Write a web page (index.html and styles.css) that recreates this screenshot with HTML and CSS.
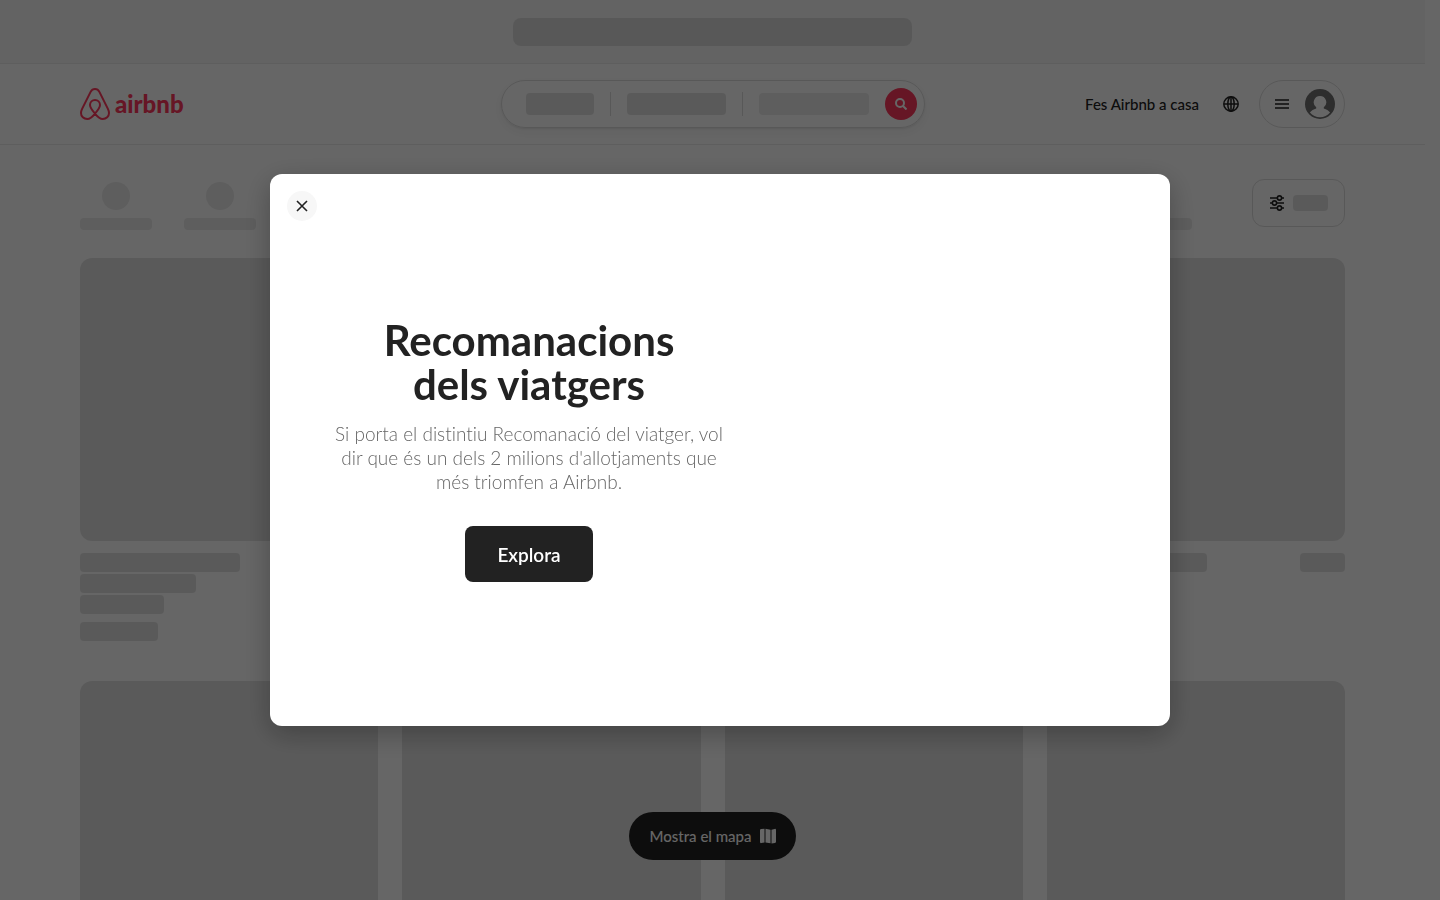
FILE: index.html
```html
<!DOCTYPE html>
<html lang="ca">
<head>
<meta charset="utf-8">
<title>Airbnb</title>
<meta name="viewport" content="width=device-width, initial-scale=1">
<link rel="stylesheet" href="styles.css">
</head>
<body>
<div class="page">
  <div class="banner"><span class="bone banner-bone"></span></div>
  <header class="header">
    <a class="logo" href="#" aria-label="Pàgina d'inici d'Airbnb">
      <svg width="30" height="32" viewBox="0 0 30 32" fill="none" stroke="currentColor" stroke-width="2"><path d="M15 25.6C12 22 10 19.400 10 16.900a5 5 0 0 1 10 0C20 19.400 18 22 15 25.600 12.500 28.800 10.200 31 7.300 31 3.700 31 1 28.300 1 24.900c0-1.200.3-2.300 1.100-4L10.600 3.900C11.600 1.900 13 1 15 1s3.400.9 4.400 2.900l8.500 17c.8 1.700 1.100 2.800 1.100 4 0 3.400-2.700 6.100-6.300 6.100-2.900 0-5.200-2.200-7.700-5.400z"/></svg>
      <span>airbnb</span>
    </a>
    <div class="search">
      <span class="bone search-a"></span><i class="rule"></i>
      <span class="bone search-b"></span><i class="rule"></i>
      <span class="bone search-c light"></span>
      <button class="search-go" aria-label="Cerca"><svg width="12" height="12" viewBox="0 0 12 12" fill="none" stroke="currentColor" stroke-width="2"><circle cx="5" cy="5" r="4"/><path d="M8 8l3.500 3.500"/></svg></button>
    </div>
    <nav class="account">
      <a class="host" href="#">Fes Airbnb a casa</a>
      <button class="globe" aria-label="Idioma"><svg width="16" height="16" viewBox="0 0 16 16" fill="none" stroke="currentColor" stroke-width="1.500"><circle cx="8" cy="8" r="7.200"/><ellipse cx="8" cy="8" rx="3.200" ry="7.200"/><path d="M1 8h14M8 1v14"/></svg></button>
      <button class="menu" aria-label="Menú">
        <svg width="14" height="10" viewBox="0 0 14 10" fill="none" stroke="#222" stroke-width="1.600"><path d="M0 1h14M0 5h14M0 9h14"/></svg>
        <svg width="30" height="30" viewBox="0 0 30 30"><circle cx="15" cy="15" r="15" fill="#717171"/><path d="M15 7a6.300 6.300 0 0 1 3.800 11.300v1.200c2.600.7 4.800 2.200 6.300 4a13.200 13.200 0 0 1-20.200 0c1.500-1.800 3.700-3.300 6.300-4v-1.200A6.300 6.300 0 0 1 15 7z" fill="#fff"/></svg>
      </button>
    </nav>
  </header>
  <main class="main">
    <div class="filters">
      <div class="cats">
        <div class="cat"><i></i><b></b></div><div class="cat"><i></i><b></b></div><div class="cat"><i></i><b></b></div><div class="cat"><i></i><b></b></div><div class="cat"><i></i><b></b></div><div class="cat"><i></i><b></b></div><div class="cat"><i></i><b></b></div><div class="cat"><i></i><b></b></div><div class="cat"><i></i><b></b></div><div class="cat"><i></i><b></b></div><div class="cat"><i></i><b></b></div>
      </div>
      <button class="filter" aria-label="Filtres">
        <svg width="14" height="16" viewBox="0 0 14 16" fill="none" stroke="#222" stroke-width="1.600"><path d="M0 3h7.500M11.500 3H14M0 8h2.500M6.500 8H14M0 13h7.500M11.500 13H14"/><circle cx="9.500" cy="3" r="2.100"/><circle cx="4.500" cy="8" r="2.100"/><circle cx="9.500" cy="13" r="2.100"/></svg>
        <span class="bone filter-bone"></span>
      </button>
    </div>
    <div class="cards">
      <div class="card"><div class="photo"></div><div class="line"><span class="bone w-a"></span><span class="bone w-e"></span></div><span class="bone w-b"></span><span class="bone w-c"></span><span class="bone w-d"></span></div>
      <div class="card"><div class="photo"></div></div>
      <div class="card"><div class="photo"></div></div>
      <div class="card"><div class="photo"></div><div class="line"><span class="bone w-a"></span><span class="bone w-e"></span></div></div>
      <div class="card"><div class="photo"></div></div>
      <div class="card"><div class="photo"></div></div>
      <div class="card"><div class="photo"></div></div>
      <div class="card"><div class="photo"></div></div>
    </div>
  </main>
  <div class="map-dock">
    <button class="map">Mostra el mapa
      <svg width="16" height="16" viewBox="0 0 16 16" fill="currentColor"><path d="M0 2.200Q0 1 1.200 1L4.500.8v13.800l-3.200.5Q0 15.300 0 14zM5.500.8l5 1v13.400l-5-.8zM11.500 1.800l3.200-.9Q16 .7 16 1.900V13.700q0 1-1 1.200l-3.500.5z"/></svg>
    </button>
  </div>
</div>
<div class="scrim">
  <section class="modal" role="dialog" aria-modal="true" aria-labelledby="title">
    <button class="close" aria-label="Tanca"><svg width="12" height="12" viewBox="0 0 12 12" fill="none" stroke="currentColor" stroke-width="1.600"><path d="M1 1l10 10M11 1L1 11"/></svg></button>
    <div class="copy">
      <h1 id="title">Recomanacions<br>dels viatgers</h1>
      <p>Si porta el distintiu Recomanació del viatger, vol<br>dir que és un dels 2 milions d'allotjaments que<br>més triomfen a Airbnb.</p>
      <button class="explore">Explora</button>
    </div>
  </section>
</div>
</body>
</html>
```
FILE: styles.css
```css
* { box-sizing: border-box; }
body { margin: 0; font-family: Lato, "Open Sans", sans-serif; font-variant-ligatures: none; color: #222; background: #fff; overflow: hidden; }
button { font: inherit; color: inherit; border: 0; padding: 0; background: none; cursor: pointer; }
a { color: inherit; text-decoration: none; }
svg { display: block; flex: none; }
.page { height: 100vh; overflow: hidden; padding-right: 15px; }
.bone { display: block; background: #e2e2e2; border-radius: 4px; }
.bone.light { background: #ebebeb; }
.banner { height: 64px; display: flex; align-items: center; justify-content: center; background: #f7f7f7; border-bottom: 1px solid #ebebeb; }
.banner-bone { width: 399px; height: 28px; border-radius: 8px; background: #ddd; }
.header { height: 81px; padding: 0 80px; display: grid; grid-template-columns: 1fr auto 1fr; align-items: center; border-bottom: 1px solid #ebebeb; }
.logo { display: flex; align-items: center; gap: 5px; color: #ff385c; font-size: 24px; line-height: 28px; font-weight: 900; }
.search { height: 48px; display: flex; align-items: center; gap: 16px; padding: 0 7px 0 24px; border: 1px solid #ddd; border-radius: 24px; box-shadow: 0 1px 2px rgba(0,0,0,.08), 0 4px 12px rgba(0,0,0,.05); }
.search .bone { height: 22px; }
.search-a { width: 68px; }
.search-b { width: 99px; }
.search-c { width: 110px; }
.rule { width: 1px; height: 24px; background: #ddd; }
.search-go { width: 32px; height: 32px; border-radius: 50%; display: grid; place-items: center; color: #fff; background: #ff385c; }
.account { display: flex; justify-content: flex-end; align-items: center; }
.host { font-size: 15px; line-height: 18px; font-weight: 500; }
.globe { margin: 0 20px 0 24px; }
.menu { display: flex; align-items: center; gap: 16px; height: 48px; padding: 0 9px 0 15px; border: 1px solid #ddd; border-radius: 24px; }
.main { padding: 34px 80px 0; }
.filters { display: flex; justify-content: space-between; align-items: flex-start; margin-bottom: 28px; }
.cats { display: flex; gap: 32px; padding-top: 3px; }
.cat { width: 72px; display: grid; justify-items: center; gap: 8px; }
.cat i { width: 28px; height: 28px; border-radius: 50%; background: #ebebeb; }
.cat b { width: 72px; height: 12px; border-radius: 4px; background: #ebebeb; }
.filter { height: 48px; display: flex; align-items: center; gap: 9px; padding: 0 16px 0 17px; border: 1px solid #ddd; border-radius: 12px; }
.filter-bone { width: 35px; height: 16px; }
.cards { display: grid; grid-template-columns: repeat(4, 1fr); gap: 40px 24px; }
.card { display: flex; flex-direction: column; gap: 2px; }
.card .bone { height: 19px; }
.photo { aspect-ratio: 20 / 19; border-radius: 12px; background: #e2e2e2; margin-bottom: 10px; }
.line { display: flex; justify-content: space-between; }
.w-a { width: 160px; }
.w-b { width: 116px; }
.w-c { width: 84px; }
.w-d { width: 78px; margin-top: 6px; }
.w-e { width: 45px; }
.map-dock { position: fixed; left: 0; right: 15px; bottom: 40px; display: flex; justify-content: center; }
.map { height: 48px; display: flex; align-items: center; gap: 8px; padding: 0 20px; border-radius: 24px; background: #222; color: #fff; font-size: 15px; font-weight: 500; }
.scrim { position: fixed; inset: 0; display: flex; align-items: center; justify-content: center; background: rgba(0,0,0,.6); }
.modal { position: relative; width: 62.5%; min-height: 552px; display: flex; align-items: center; border-radius: 12px; background: #fff; box-shadow: 0 8px 28px rgba(0,0,0,.28); }
.close { position: absolute; left: 17px; top: 17px; width: 30px; height: 30px; border-radius: 50%; display: grid; place-items: center; background: #f7f7f7; }
.copy { padding: 0 64px; display: flex; flex-direction: column; align-items: center; text-align: center; flex: 0 0 518px; }
h1 { margin: 0 0 16px; font-size: 42px; line-height: 44px; font-weight: 700; }
p { margin: 0 0 32px; font-size: 19px; line-height: 24px; font-weight: 300; color: #666; white-space: nowrap; }
.explore { height: 56px; padding: 0 32px; border-radius: 8px; background: #222; color: #fff; font-size: 19px; font-weight: 600; }
```
